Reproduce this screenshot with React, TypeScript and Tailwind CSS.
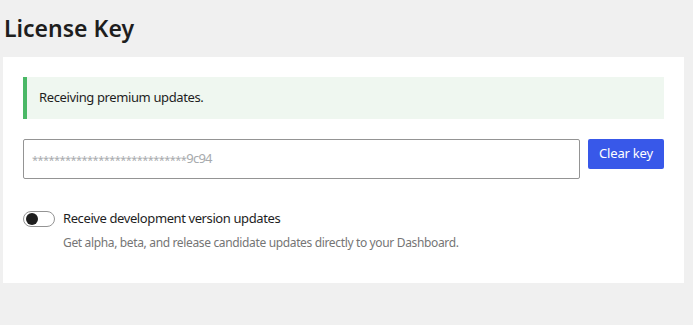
export default function App() {
  return (
    <div
      className="min-h-[325px] w-[693px] bg-[#f0f0f0] text-[#1e1e1e]"
      style={{ fontFamily: '"Noto Sans", "Open Sans", sans-serif' }}
    >
      <div className="pl-[4px] pt-[12px]">
        <h1 className="text-[23px] font-semibold leading-[32px] text-[#1e1e1e]">
          License Key
        </h1>
      </div>
      <div className="ml-[3px] mt-[13px] flex w-[681px] flex-col bg-white px-[20px] pb-[31px] pt-[20px]">
        <div className="flex h-[42px] items-center border-l-4 border-[#4ab866] bg-[#eff7f0] pl-[12px] text-[13px] tracking-[-0.38px]">
          Receiving premium updates.
        </div>
        <div className="mt-[20px] flex items-start gap-[8px]">
          <div className="flex h-[40px] w-[557px] items-center rounded-[2px] border border-[#949494] px-[8px] text-[13px] text-[#a7aaad]">
            <span className="pt-[2px] text-[11px] tracking-[-0.55px]">****************************</span>
            <span className="tracking-[-0.8px]">9c94</span>
          </div>
          <button className="h-[30px] w-[76px] rounded-[2px] bg-[#3858e9] text-[13px] tracking-[-0.2px] text-white">
            Clear key
          </button>
        </div>
        <div className="mt-[30px] flex items-center gap-[8px]">
          <div className="flex h-[16px] w-[32px] items-center rounded-full border border-[#949494] px-[2px]">
            <div className="h-[12px] w-[12px] rounded-full bg-[#1e1e1e]" />
          </div>
          <span className="text-[13px] tracking-[-0.4px] text-[#1e1e1e]">
            Receive development version updates
          </span>
        </div>
        <p className="ml-[40px] mt-[5px] text-[12px] tracking-[-0.35px] text-[#757575]">
          Get alpha, beta, and release candidate updates directly to your Dashboard.
        </p>
      </div>
    </div>
  );
}
